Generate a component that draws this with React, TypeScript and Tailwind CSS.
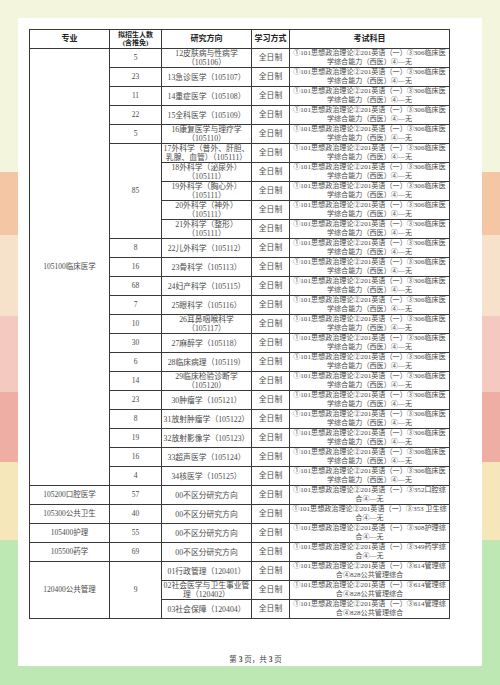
import React from "react";

type Row = {
  major?: { text: string; span: number };
  quota?: { text: string; span: number };
  direction: string[];
  exam: string[];
};

const clinical = [
  "①101思想政治理论②201英语（一）③306临床医",
  "学综合能力（西医）④—无",
];
const mgmt = [
  "①101思想政治理论②201英语（一）③614管理综",
  "合④828公共管理综合",
];

const rows: Row[] = [
  { major: { text: "105100临床医学", span: 23 }, quota: { text: "5", span: 1 }, direction: ["12皮肤病与性病学", "（105106）"], exam: clinical },
  { quota: { text: "23", span: 1 }, direction: ["13急诊医学（105107）"], exam: clinical },
  { quota: { text: "11", span: 1 }, direction: ["14重症医学（105108）"], exam: clinical },
  { quota: { text: "22", span: 1 }, direction: ["15全科医学（105109）"], exam: clinical },
  { quota: { text: "5", span: 1 }, direction: ["16康复医学与理疗学", "（105110）"], exam: clinical },
  { quota: { text: "85", span: 5 }, direction: ["17外科学（普外、肝胆、", "乳腺、血管）（105111）"], exam: clinical },
  { direction: ["18外科学（泌尿外）", "（105111）"], exam: clinical },
  { direction: ["19外科学（胸心外）", "（105111）"], exam: clinical },
  { direction: ["20外科学（神外）", "（105111）"], exam: clinical },
  { direction: ["21外科学（整形）", "（105111）"], exam: clinical },
  { quota: { text: "8", span: 1 }, direction: ["22儿外科学（105112）"], exam: clinical },
  { quota: { text: "16", span: 1 }, direction: ["23骨科学（105113）"], exam: clinical },
  { quota: { text: "68", span: 1 }, direction: ["24妇产科学（105115）"], exam: clinical },
  { quota: { text: "7", span: 1 }, direction: ["25眼科学（105116）"], exam: clinical },
  { quota: { text: "10", span: 1 }, direction: ["26耳鼻咽喉科学", "（105117）"], exam: clinical },
  { quota: { text: "30", span: 1 }, direction: ["27麻醉学（105118）"], exam: clinical },
  { quota: { text: "6", span: 1 }, direction: ["28临床病理（105119）"], exam: clinical },
  { quota: { text: "14", span: 1 }, direction: ["29临床检验诊断学", "（105120）"], exam: clinical },
  { quota: { text: "23", span: 1 }, direction: ["30肿瘤学（105121）"], exam: clinical },
  { quota: { text: "8", span: 1 }, direction: ["31放射肿瘤学（105122）"], exam: clinical },
  { quota: { text: "19", span: 1 }, direction: ["32放射影像学（105123）"], exam: clinical },
  { quota: { text: "16", span: 1 }, direction: ["33超声医学（105124）"], exam: clinical },
  { quota: { text: "4", span: 1 }, direction: ["34核医学（105125）"], exam: clinical },
  { major: { text: "105200口腔医学", span: 1 }, quota: { text: "57", span: 1 }, direction: ["00不区分研究方向"], exam: ["①101思想政治理论②201英语（一）③352口腔综", "合④—无"] },
  { major: { text: "105300公共卫生", span: 1 }, quota: { text: "40", span: 1 }, direction: ["00不区分研究方向"], exam: ["①101思想政治理论②201英语（一）③353 卫生综", "合④—无"] },
  { major: { text: "105400护理", span: 1 }, quota: { text: "55", span: 1 }, direction: ["00不区分研究方向"], exam: ["①101思想政治理论②201英语（一）③308护理综", "合④—无"] },
  { major: { text: "105500药学", span: 1 }, quota: { text: "69", span: 1 }, direction: ["00不区分研究方向"], exam: ["①101思想政治理论②201英语（一）③349药学综", "合④—无"] },
  { major: { text: "120400公共管理", span: 3 }, quota: { text: "9", span: 3 }, direction: ["01行政管理（120401）"], exam: mgmt },
  { direction: ["02社会医学与卫生事业管", "理（120402）"], exam: mgmt },
  { direction: ["03社会保障（120404）"], exam: mgmt },
];

const font = "font-['Liberation_Serif','Noto_Sans_CJK_SC',serif]";
const cell = "border border-[#3a3a3a] p-0 text-center align-middle whitespace-nowrap overflow-hidden";

function Lines({ lines }: { lines: string[] }) {
  return (
    <>
      {lines.map((l, i) => (
        <div key={i}>{l}</div>
      ))}
    </>
  );
}

export default function App() {
  return (
    <div
      className={`h-[685px] w-[500px] overflow-hidden pt-[18px] pl-[18px] bg-[linear-gradient(180deg,#f3f5dc_0px,#f3f5dc_172px,#f5c6a4_172px,#f5c6a4_235px,#f6e1ca_235px,#f6e1ca_316px,#f3c9c0_316px,#f3c9c0_392px,#efaea3_392px,#efaea3_462px,#f6e7bb_462px,#f6e7bb_540px,#bde7b3_540px)] ${font}`}
    >
      <div className="flex h-[648px] w-[464px] flex-col bg-white pl-[11px] pt-[11px]">
        <table className="w-[420px] table-fixed border-collapse text-[#4a4a4a]">
          <colgroup>
            <col className="w-[80px]" />
            <col className="w-[52px]" />
            <col className="w-[90px]" />
            <col className="w-[38px]" />
            <col className="w-[160px]" />
          </colgroup>
          <thead>
            <tr className="h-[19px] font-bold text-[#222]">
              <th className={`${cell} text-[8px]`}>专业</th>
              <th className={`${cell} text-[7px] leading-[8px]`}>
                <div>拟招生人数</div>
                <div>(含推免)</div>
              </th>
              <th className={`${cell} text-[8px]`}>研究方向</th>
              <th className={`${cell} text-[8px]`}>学习方式</th>
              <th className={`${cell} text-[8px]`}>考试科目</th>
            </tr>
          </thead>
          <tbody>
            {rows.map((r, i) => (
              <tr key={i} className="h-[18.8px]">
                {r.major && (
                  <td rowSpan={r.major.span} className={`${cell} text-[7.5px]`}>
                    {r.major.text}
                  </td>
                )}
                {r.quota && (
                  <td rowSpan={r.quota.span} className={`${cell} text-[7.5px]`}>
                    {r.quota.text}
                  </td>
                )}
                <td className={`${cell} text-[7.8px] leading-[9px]`}>
                  <Lines lines={r.direction} />
                </td>
                <td className={`${cell} text-[7.8px]`}>全日制</td>
                <td className={`${cell} text-[7.1px] leading-[9px]`}>
                  <Lines lines={r.exam} />
                </td>
              </tr>
            ))}
          </tbody>
        </table>
        <div className="mt-[35px] w-[453px] text-center text-[7.5px] text-[#444]">
          第 <span className="font-bold">3</span> 页，共 <span className="font-bold">3</span> 页
        </div>
      </div>
    </div>
  );
}
